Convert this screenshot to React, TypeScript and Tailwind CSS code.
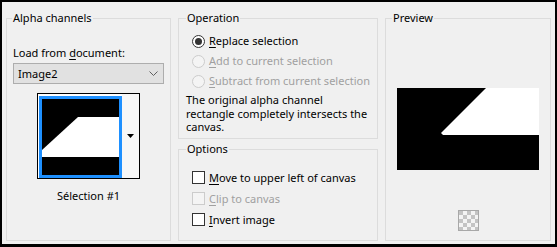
import React from "react";

function Radio({ checked, disabled, children }: { checked?: boolean; disabled?: boolean; children: React.ReactNode }) {
  return (
    <div className="flex h-[20px] items-center gap-[4px]">
      <span
        className={`flex h-[13px] w-[13px] items-center justify-center rounded-full border ${
          disabled ? "border-[#cccccc] bg-[#f4f4f4]" : "border-[#333333] bg-white"
        }`}
      >
        {checked && <span className="h-[7px] w-[7px] rounded-full bg-[#333333]" />}
      </span>
      <span className={disabled ? "text-[#a0a0a0]" : "text-black"}>{children}</span>
    </div>
  );
}

function Check({ disabled, children }: { disabled?: boolean; children: React.ReactNode }) {
  return (
    <div className="flex h-[21px] items-center gap-[4px]">
      <span
        className={`h-[13px] w-[13px] border ${disabled ? "border-[#cccccc] bg-[#f4f4f4]" : "border-[#333333] bg-white"}`}
      />
      <span className={disabled ? "text-[#a0a0a0]" : "text-black"}>{children}</span>
    </div>
  );
}

function Thumb() {
  return (
    <svg width="77" height="76" viewBox="0 0 77 76" className="block">
      <rect width="77" height="76" fill="#000" />
      <polygon points="0,51 36,18 77,18 77,58 0,58" fill="#fff" />
    </svg>
  );
}

function PreviewImage() {
  return (
    <svg width="142" height="82" viewBox="0 0 142 82" className="block">
      <rect width="142" height="82" fill="#000" />
      <polygon points="89,0 142,0 142,47 46,47 44,45" fill="#fff" />
    </svg>
  );
}

function Checker() {
  return (
    <svg width="21" height="21" viewBox="0 0 21 21" className="block">
      <defs>
        <pattern id="chk" width="8" height="8" patternUnits="userSpaceOnUse" x="1" y="1">
          <rect width="8" height="8" fill="#f4f4f4" />
          <rect width="4" height="4" fill="#c4c4c4" />
          <rect x="4" y="4" width="4" height="4" fill="#c4c4c4" />
        </pattern>
      </defs>
      <rect x="0.5" y="0.5" width="20" height="20" fill="url(#chk)" stroke="#a8a8a8" />
    </svg>
  );
}

export default function App() {
  return (
    <div className="box-border flex h-[247px] w-[557px] gap-[7px] border-x-2 border-t-2 border-b-[3px] border-black bg-[#f0f0f0] px-[4px] pt-[8px] pb-[3px] font-['Noto_Sans',sans-serif] text-[11px] leading-[16px] text-black">
      {/* Alpha channels */}
      <fieldset className="m-0 w-[165px] min-w-0 border border-[#dcdcdc] p-0">
        <legend className="ml-[5px] px-[1px] leading-[16px]">Alpha channels</legend>
        <div className="flex flex-col pt-[19px]">
          <div className="pl-[6px]">
            Load from <span className="underline underline-offset-2">d</span>ocument:
          </div>
          <div className="mx-[6px] mt-[2px] flex h-[21px] items-center justify-between border border-[#adadad] bg-[#e1e1e1] pr-[5px] pl-[4px]">
            <span>Image2</span>
            <svg width="9" height="6" viewBox="0 0 9 6">
              <path d="M0.5 0.5 L4.5 4.5 L8.5 0.5" fill="none" stroke="#606060" strokeWidth="1" />
            </svg>
          </div>
          <div className="mt-[9px] flex justify-center">
            <div className="flex h-[86px] w-[103px] border border-black bg-white">
              <div className="pt-[2px] pl-[1px]">
                <div className="h-[82px] w-[83px] border-[3px] border-[#1e90ff] bg-black">
                  <Thumb />
                </div>
              </div>
              <div className="flex flex-1 items-center justify-center bg-[#f7f7f7]">
                <svg width="7" height="4" viewBox="0 0 7 4">
                  <polygon points="0,0 7,0 3.5,4" fill="#000" />
                </svg>
              </div>
            </div>
          </div>
          <div className="mt-[9px] text-center">Sélection #1</div>
        </div>
      </fieldset>

      {/* Operation + Options */}
      <div className="flex w-[200px] flex-col gap-[2px]">
        <fieldset className="m-0 h-[129px] min-w-0 border border-[#dcdcdc] p-0">
          <legend className="ml-[7px] px-[1px] leading-[16px]">Operation</legend>
          <div className="pt-[5px] pl-[13px]">
            <Radio checked>
              <span className="underline underline-offset-2">R</span>eplace selection
            </Radio>
            <Radio disabled>
              <span className="underline underline-offset-2">A</span>dd to current selection
            </Radio>
            <Radio disabled>
              <span className="underline underline-offset-2">S</span>ubtract from current selection
            </Radio>
          </div>
          <p className="mt-[2px] pl-[7px] leading-[13.5px]">
            The original alpha channel
            <br />
            rectangle completely intersects the
            <br />
            canvas.
          </p>
        </fieldset>
        <fieldset className="m-0 min-w-0 flex-1 border border-[#dcdcdc] p-0">
          <legend className="ml-[7px] px-[1px] leading-[16px]">Options</legend>
          <div className="pt-[10px] pl-[13px]">
            <Check>
              <span className="underline underline-offset-2">M</span>ove to upper left of canvas
            </Check>
            <Check disabled>
              <span className="underline underline-offset-2">C</span>lip to canvas
            </Check>
            <Check>
              <span className="underline underline-offset-2">I</span>nvert image
            </Check>
          </div>
        </fieldset>
      </div>

      {/* Preview */}
      <fieldset className="m-0 w-[166px] min-w-0 border border-[#dcdcdc] p-0">
        <legend className="ml-[6px] px-[1px] leading-[16px]">Preview</legend>
        <div className="flex flex-col items-center pt-[62px]">
          <PreviewImage />
          <div className="mt-[40px]">
            <Checker />
          </div>
        </div>
      </fieldset>
    </div>
  );
}
